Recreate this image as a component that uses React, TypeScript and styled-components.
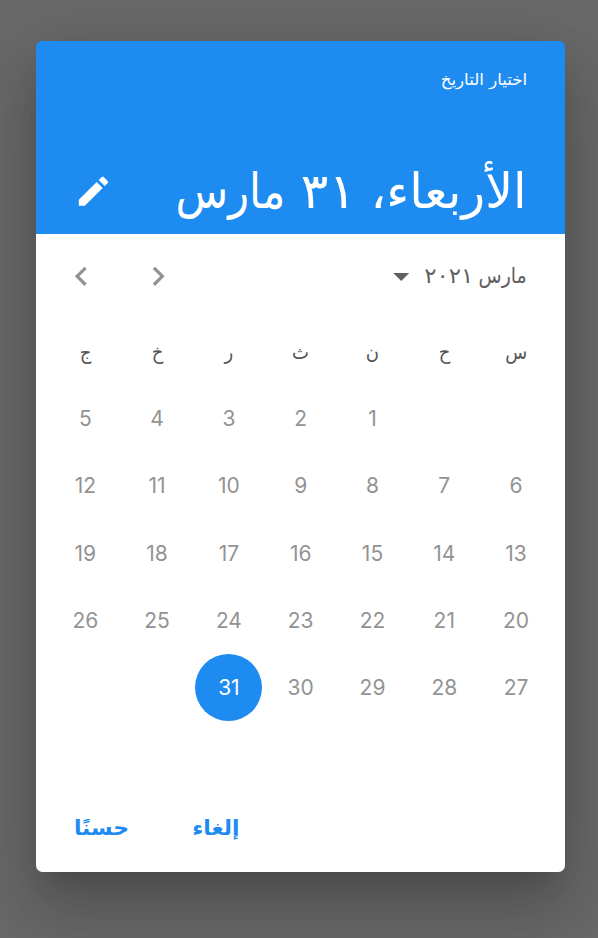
import React from 'react';
import styled, { createGlobalStyle } from 'styled-components';

const BLUE = '#1e8bf0';

const GlobalStyle = createGlobalStyle`
  *, *::before, *::after { box-sizing: border-box; }
  html, body { margin: 0; padding: 0; background: #696969; }
  body { overflow: hidden; }
  button { border: 0; padding: 0; margin: 0; background: none; font: inherit; color: inherit; }
`;

const Backdrop = styled.div`
  width: 598px;
  height: 938px;
  padding: 41.3px 0 0 36.2px;
  background: #696969;
  overflow: hidden;
  font-family: Inter, 'DejaVu Sans', sans-serif;
`;

const Dialog = styled.section`
  width: 528.6px;
  height: 830.5px;
  display: flex;
  flex-direction: column;
  border-radius: 6.5px;
  background: linear-gradient(${BLUE} 100px, #fff 0);
  overflow: hidden;
  box-shadow:
    0 18px 25px -12px rgba(0, 0, 0, 0.15),
    0 40px 62px 5px rgba(0, 0, 0, 0.14),
    0 15px 75px 13px rgba(0, 0, 0, 0.1);
`;

const Header = styled.header`
  flex: none;
  height: 192.9px;
  padding: 25px 38px 0 38px;
  background: ${BLUE};
  color: #fff;
`;

const ArabicText = styled.span<{ $size: number; $stretch?: number; $bold?: boolean; $from?: string }>`
  display: inline-block;
  font-family: 'DejaVu Sans', sans-serif;
  font-size: ${(p) => p.$size}px;
  font-weight: ${(p) => (p.$bold ? 700 : 400)};
  line-height: 1;
  white-space: pre;
  transform: scaleX(${(p) => p.$stretch ?? 1});
  transform-origin: ${(p) => p.$from ?? 'right'} center;
`;

const Word = styled.span<{ $width: number }>`
  flex: none;
  display: flex;
  width: ${(p) => p.$width}px;
`;

const HeaderLabel = styled.div`
  height: 26px;
  padding-top: 1px;
  display: flex;
  align-items: center;
`;

const HeaderRow = styled.div`
  height: 92px;
  margin-top: 53px;
  display: flex;
  align-items: center;
  justify-content: space-between;
`;

const DateTitle = styled.h1`
  margin: 0;
  width: 352px;
  display: flex;
  font-weight: 400;
`;

const IconButton = styled.button`
  display: flex;
  width: 38.5px;
  height: 38.5px;
  flex: none;
`;

const Icon = styled.svg`
  width: 100%;
  height: 100%;
  fill: currentColor;
`;

const MonthBar = styled.div`
  flex: none;
  height: 83.3px;
  padding: 0.5px 38px 0 26px;
  display: flex;
  align-items: center;
  justify-content: space-between;
`;

const MonthSwitch = styled.button`
  display: flex;
  align-items: center;
  color: #606060;
`;

const MonthName = styled.span`
  width: 104px;
  padding-bottom: 1px;
  display: flex;
`;

const DropIcon = styled(Icon)`
  width: 38.5px;
  height: 38.5px;
  margin-right: 2.5px;
`;

const Arrows = styled.div`
  display: flex;
  gap: 37.9px;
  color: #929292;
`;

const Calendar = styled.div`
  flex: none;
  display: grid;
  grid-template-columns: repeat(7, 71.8px);
  grid-auto-rows: 67.35px;
  padding: 0 12.8px;
`;

const Cell = styled.div`
  display: flex;
  align-items: center;
  justify-content: center;
`;

const Weekday = styled(Cell)`
  color: #555;
  padding-top: 1px;
`;

const Day = styled.button<{ $selected: boolean }>`
  width: 67px;
  height: 67px;
  border-radius: 50%;
  background: ${(p) => (p.$selected ? BLUE : 'transparent')};
  color: ${(p) => (p.$selected ? '#fff' : '#939393')};
  font-size: 21px;
  line-height: 1;
`;

const Actions = styled.footer`
  margin-top: auto;
  height: 86px;
  padding-left: 37.5px;
  display: flex;
  justify-content: flex-end;
  gap: 63px;
  color: ${BLUE};
`;

const Action = styled.button<{ $width: number }>`
  width: ${(p) => p.$width}px;
  height: 86px;
  display: flex;
  align-items: center;
`;

const WEEKDAYS = ['س', 'ح', 'ن', 'ث', 'ر', 'خ', 'ج'];
const LEADING_BLANKS = 2;
const SELECTED = 31;
const DAYS = Array.from({ length: 31 }, (_, i) => i + 1);

export default function App() {
  return (
    <>
      <GlobalStyle />
      <Backdrop>
        <Dialog dir="rtl" lang="ar">
          <Header>
            <HeaderLabel>
              <ArabicText $size={16} $stretch={1.04}>اختيار التاريخ</ArabicText>
            </HeaderLabel>
            <HeaderRow>
              <DateTitle>
                <Word $width={171}>
                  <ArabicText $size={48.5} $stretch={1.01}>الأربعاء،</ArabicText>
                </Word>
                <Word $width={70}>
                  <ArabicText $size={48.5} $stretch={1.06}>٣١</ArabicText>
                </Word>
                <Word $width={111}>
                  <ArabicText $size={48.5} $stretch={0.89}>مارس</ArabicText>
                </Word>
              </DateTitle>
              <IconButton aria-label="تعديل">
                <Icon viewBox="0 0 24 24">
                  <path d="M3 17.25V21h3.75L17.9 9.94l-3.75-3.75L3 17.25zM20.95 6.95c.39-.39.39-1.02 0-1.41l-2.34-2.34c-.39-.39-1.02-.39-1.41 0l-1.83 1.83 3.75 3.75 1.83-1.83z" />
                </Icon>
              </IconButton>
            </HeaderRow>
          </Header>
          <MonthBar>
            <MonthSwitch>
              <MonthName>
                <Word $width={53.5}>
                  <ArabicText $size={21.5} $stretch={0.88}>مارس</ArabicText>
                </Word>
                <Word $width={50.5}>
                  <ArabicText $size={21.5} $stretch={1.06}>٢٠٢١</ArabicText>
                </Word>
              </MonthName>
              <DropIcon viewBox="0 0 24 24">
                <path d="M7 10l5 5 5-5z" />
              </DropIcon>
            </MonthSwitch>
            <Arrows>
              <IconButton aria-label="السابق">
                <Icon viewBox="0 0 24 24">
                  <path d="M10 6L8.59 7.41 13.17 12l-4.58 4.59L10 18l6-6z" />
                </Icon>
              </IconButton>
              <IconButton aria-label="التالي">
                <Icon viewBox="0 0 24 24">
                  <path d="M15.41 7.41L14 6l-6 6 6 6 1.41-1.41L10.83 12z" />
                </Icon>
              </IconButton>
            </Arrows>
          </MonthBar>
          <Calendar>
            {WEEKDAYS.map((name) => (
              <Weekday key={name}>
                <ArabicText $size={20} $stretch={0.9} $from="center">{name}</ArabicText>
              </Weekday>
            ))}
            {Array.from({ length: LEADING_BLANKS }, (_, i) => (
              <Cell key={`blank-${i}`} />
            ))}
            {DAYS.map((day) => (
              <Cell key={day}>
                <Day $selected={day === SELECTED}>{day}</Day>
              </Cell>
            ))}
          </Calendar>
          <Actions>
            <Action $width={48}>
              <ArabicText $size={21} $bold $stretch={1.04}>إلغاء</ArabicText>
            </Action>
            <Action $width={55}>
              <ArabicText $size={21} $bold $stretch={1.04}>حسنًا</ArabicText>
            </Action>
          </Actions>
        </Dialog>
      </Backdrop>
    </>
  );
}
